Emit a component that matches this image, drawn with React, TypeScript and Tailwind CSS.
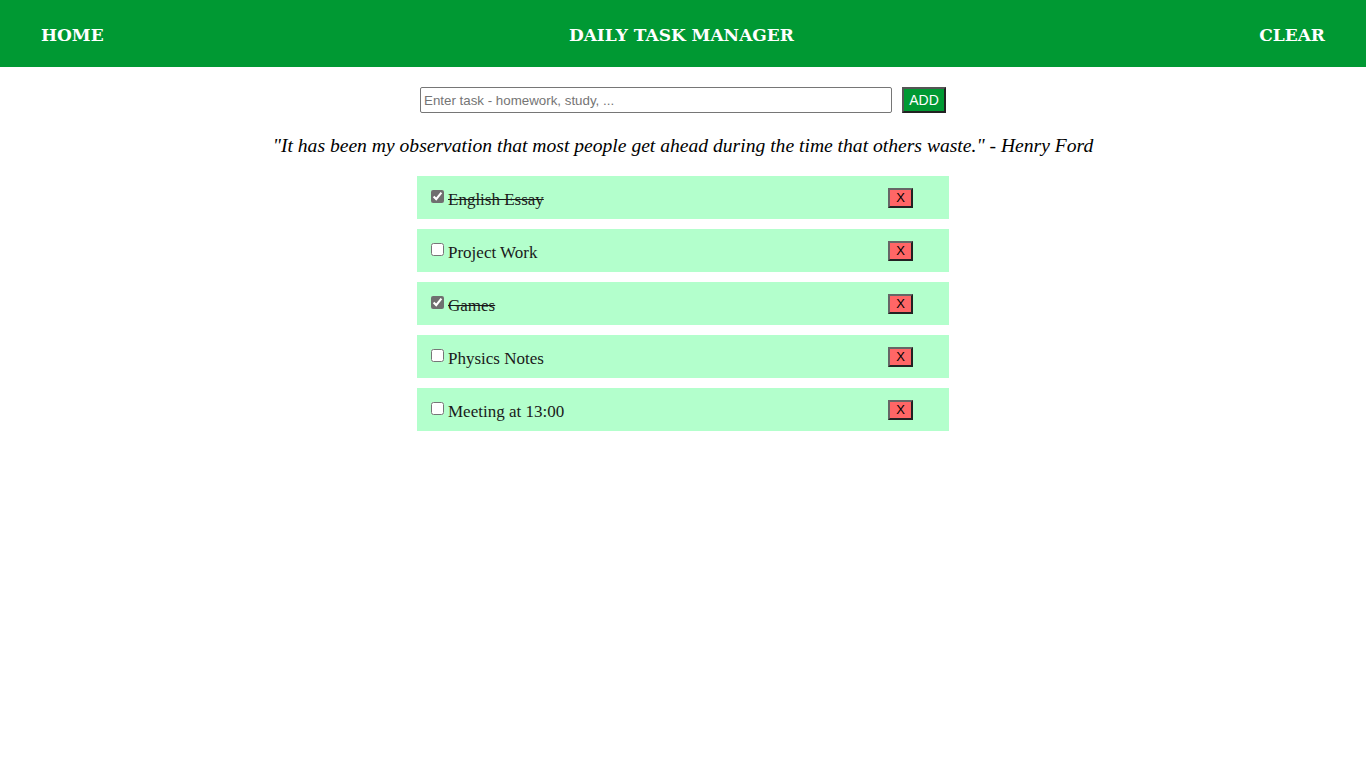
import { useState } from "react";

interface Task {
  id: number;
  text: string;
  done: boolean;
}

const initialTasks: Task[] = [
  { id: 1, text: "English Essay", done: true },
  { id: 2, text: "Project Work", done: false },
  { id: 3, text: "Games", done: true },
  { id: 4, text: "Physics Notes", done: false },
  { id: 5, text: "Meeting at 13:00", done: false },
];

export default function App() {
  const [tasks, setTasks] = useState<Task[]>(initialTasks);
  const [draft, setDraft] = useState("");

  const toggle = (id: number) =>
    setTasks((ts) => ts.map((t) => (t.id === id ? { ...t, done: !t.done } : t)));

  const remove = (id: number) => setTasks((ts) => ts.filter((t) => t.id !== id));

  const add = () => {
    if (!draft.trim()) return;
    setTasks((ts) => [...ts, { id: Date.now(), text: draft.trim(), done: false }]);
    setDraft("");
  };

  return (
    <div className="min-h-screen bg-white">
      {/* Top bar */}
      <header className="flex h-[67px] items-center justify-between bg-[#009933] px-[41px] pt-[4px] font-['DejaVu_Serif',serif] text-[17px] font-bold text-white">
        <span>HOME</span>
        <span>DAILY TASK MANAGER</span>
        <span>CLEAR</span>
      </header>

      {/* Input row */}
      <div className="mt-[20px] flex justify-center gap-[10px]">
        <input
          type="text"
          value={draft}
          onChange={(e) => setDraft(e.target.value)}
          placeholder="Enter task - homework, study, ..."
          className="h-[26px] w-[472px] rounded-[2px] border border-[#767676] px-[3px] font-['Liberation_Sans',Arial,sans-serif] text-[13.33px] text-black placeholder:text-[#757575]"
        />
        <button
          onClick={add}
          className="h-[26px] w-[44px] border-2 border-t-[#555] border-l-[#555] border-r-[#222] border-b-[#222] bg-[#009933] font-['Liberation_Sans',Arial,sans-serif] text-[14px] text-white"
        >
          ADD
        </button>
      </div>

      {/* Quote */}
      <p className="mt-[18px] text-center font-['Liberation_Serif',serif] text-[19.6px] leading-[29px] italic text-black">
        "It has been my observation that most people get ahead during the time that others waste." - Henry Ford
      </p>

      {/* Task list */}
      <ul className="mx-auto mt-[16px] flex w-[532px] flex-col gap-[10px]">
        {tasks.map((t) => (
          <li key={t.id} className="flex h-[43px] items-center bg-[#b3ffcc] pl-[10px] pr-[36px]">
            <input
              type="checkbox"
              checked={t.done}
              onChange={() => toggle(t.id)}
              className="mb-[3px] ml-[4px] mr-[4px] h-[13px] w-[13px] accent-[#6f6f6f]"
            />
            <span
              className={`mt-[4px] font-['Liberation_Serif',serif] text-[17px] text-[#1a1a1a] ${t.done ? "line-through" : ""}`}
            >
              {t.text}
            </span>
            <button
              onClick={() => remove(t.id)}
              className="ml-auto h-[20px] w-[25px] border-2 border-t-[#666] border-l-[#666] border-r-[#222] border-b-[#222] bg-[#ff6666] font-['Liberation_Sans',Arial,sans-serif] text-[13px] leading-none text-black"
            >
              X
            </button>
          </li>
        ))}
      </ul>
    </div>
  );
}
